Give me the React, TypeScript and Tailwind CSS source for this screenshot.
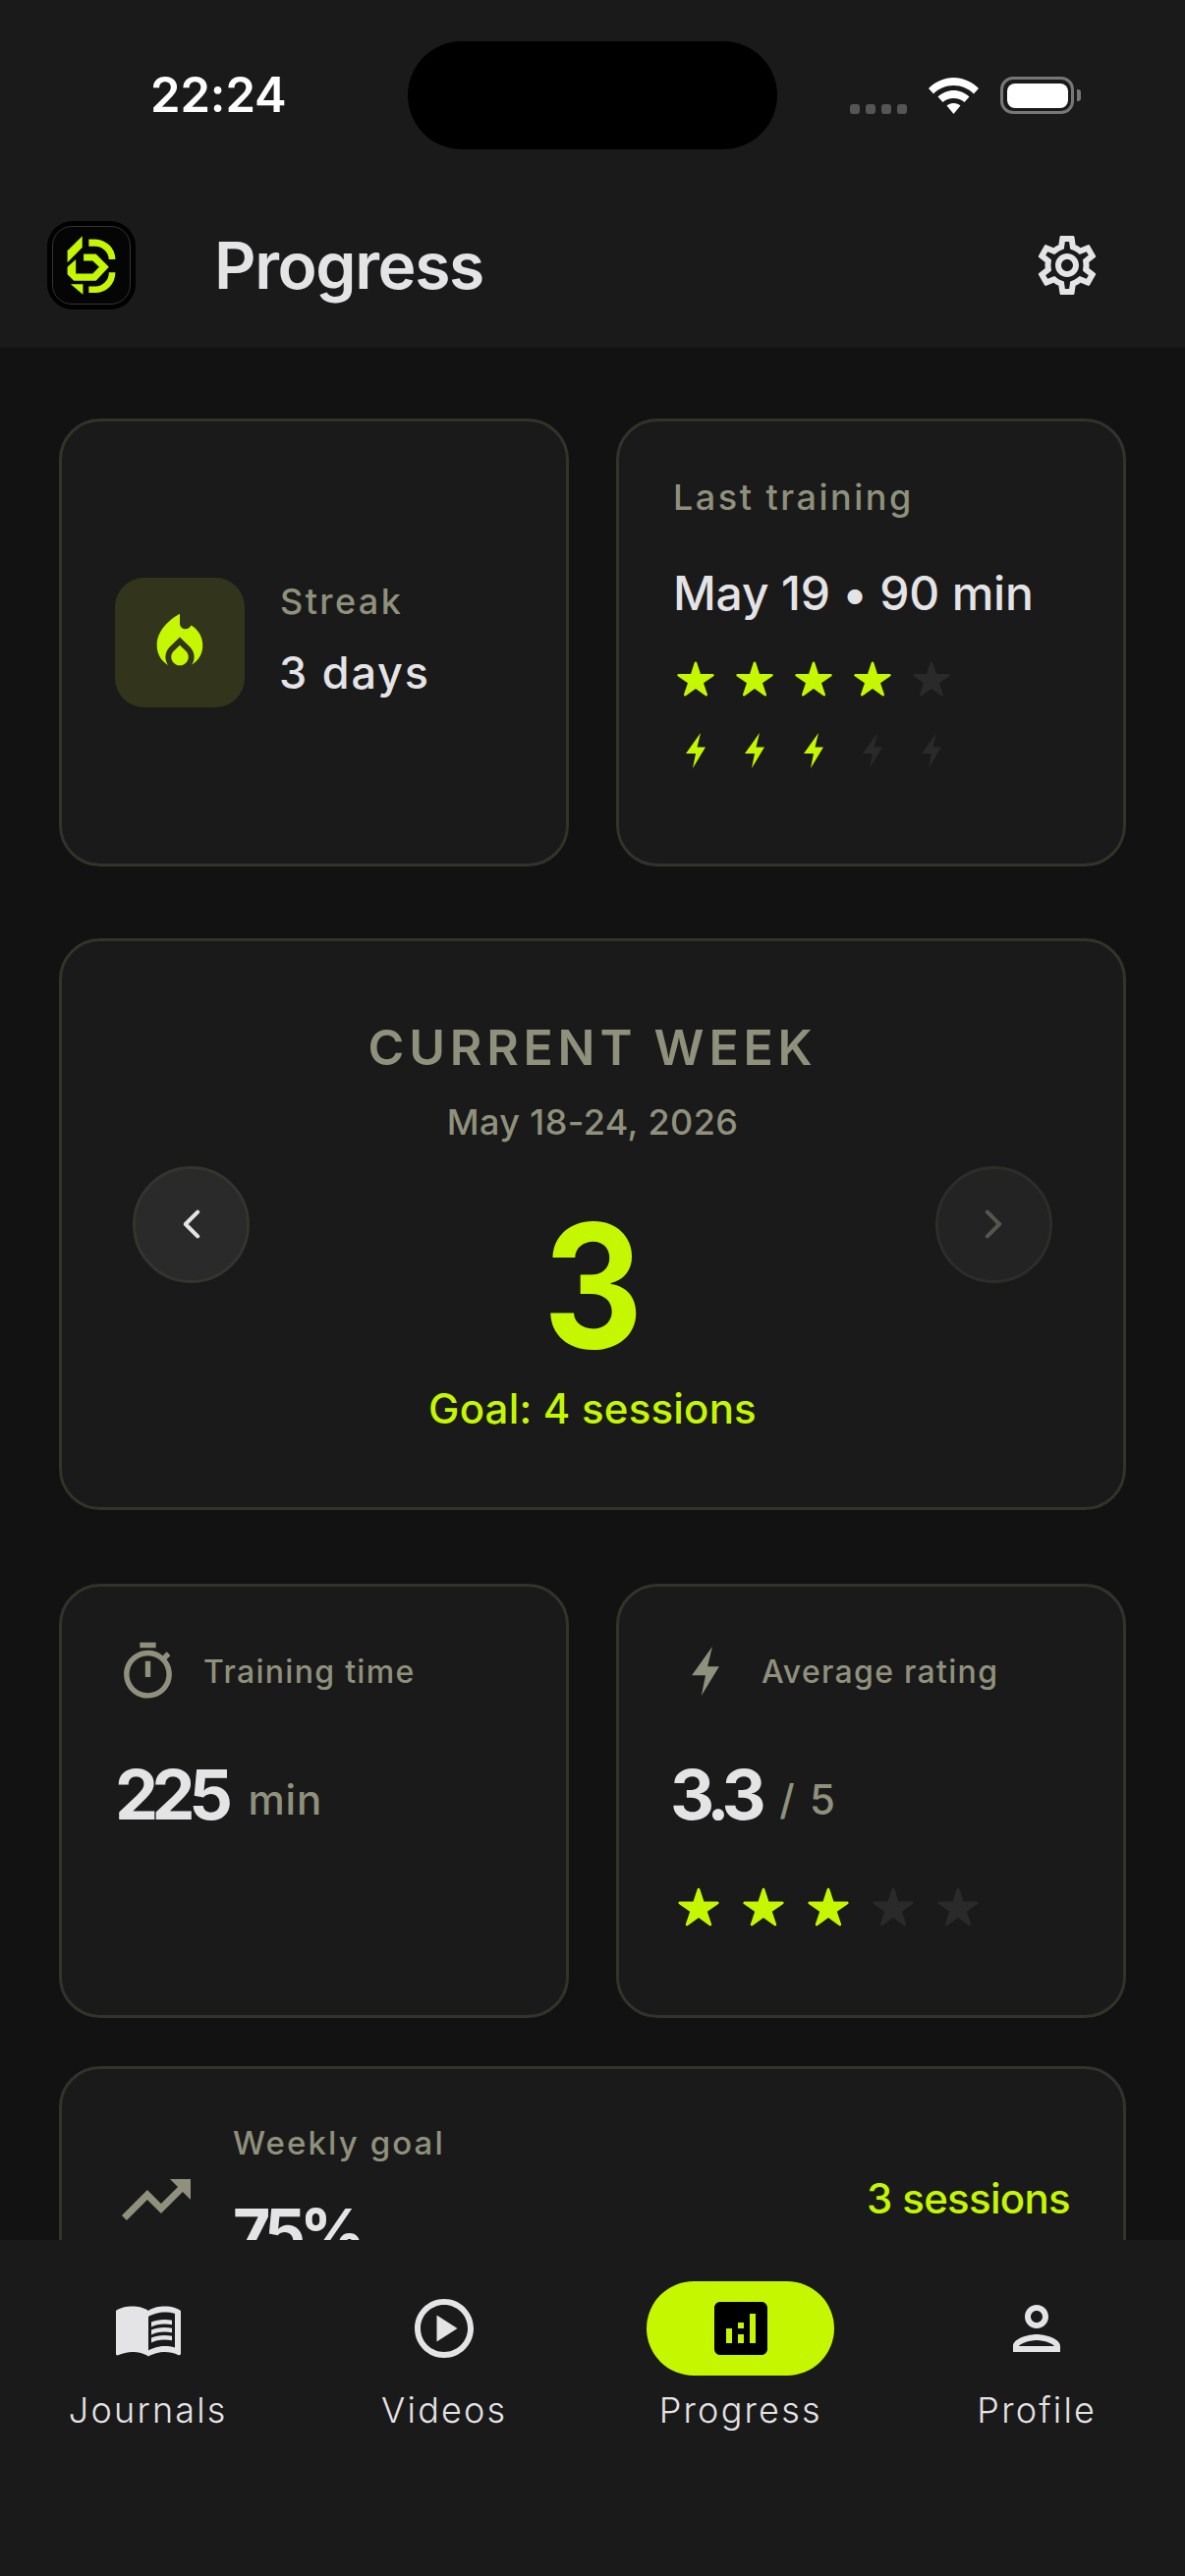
import React from "react";
import { IoStar, IoChevronBack, IoChevronForward } from "react-icons/io5";
import {
  MdLocalFireDepartment,
  MdOutlineTimer,
  MdTrendingUp,
  MdOutlineSettings,
  MdMenuBook,
  MdOutlinePlayCircle,
  MdAnalytics,
  MdOutlinePerson,
} from "react-icons/md";

function Bolt({ className }: { className: string }) {
  return (
    <svg viewBox="0 0 20 36" className={className} fill="currentColor">
      <path d="M15 0 L0 21 H10 L7 36 L20 14.5 H11.5 Z" />
    </svg>
  );
}

function Logo() {
  return (
    <div className="flex h-[90px] w-[90px] items-center justify-center rounded-[26px] bg-black">
      <div className="flex h-[80px] w-[80px] items-center justify-center rounded-[20px] border border-[#34352c] bg-[#050505]">
        <svg viewBox="88 106 156 188" className="h-[62px] w-[52px]" fill="#c4f700">
          <path d="M138 110 V145 L92 192 V155 Z" />
          <path d="M158 120 H178 A62 62 0 0 1 240 182 H220 A42 42 0 0 0 178 142 H158 Z" />
          <path d="M142 165 H180 L220 205 L180 248 H112 L92 228 V205 L118 182 V226 H170 L190 205 L170 186 H142 Z" />
          <path d="M158 285 V265 H178 A42 42 0 0 0 220 222 H240 A62 62 0 0 1 178 285 Z" />
          <path d="M102 258 H140 V290 Z" />
        </svg>
      </div>
    </div>
  );
}

function StatusBar() {
  return (
    <div className="flex pt-[42px]">
      <div className="flex h-[110px] w-[415px] items-center pl-[153px] text-[49px] leading-[60px] font-semibold tracking-[-0.1px] text-white">
        22:24
      </div>
      <div className="h-[110px] w-[376px] rounded-full bg-black" />
      <div className="flex h-[74px] items-end pl-[74px]">
        <div className="flex gap-[6px]">
          <div className="h-[10px] w-[10px] rounded-[3px] bg-[#555555]" />
          <div className="h-[10px] w-[10px] rounded-[3px] bg-[#555555]" />
          <div className="h-[10px] w-[10px] rounded-[3px] bg-[#555555]" />
          <div className="h-[10px] w-[10px] rounded-[3px] bg-[#555555]" />
        </div>
        <svg viewBox="0 0 51 37" className="ml-[22px] h-[37px] w-[51px]" fill="white">
          <path d="M25.5 0 C35 0 44 4 51 11 L46 16.5 C40.500 11 33.500 8 25.500 8 C17.500 8 10.500 11 5 16.500 L0 11 C7 4 16 0 25.500 0 Z" />
          <path d="M25.500 13 C31.500 13 37 15.500 41.500 19.500 L36.500 25 C33.500 22.500 29.500 21 25.500 21 C21.500 21 17.500 22.500 14.500 25 L9.500 19.500 C14 15.500 19.500 13 25.500 13 Z" />
          <path d="M25.500 26 C28.500 26 30.500 27 32.500 28.500 L25.500 37 L18.500 28.500 C20.500 27 22.500 26 25.500 26 Z" />
        </svg>
        <div className="ml-[22px] flex h-[38px] w-[75px] items-center justify-center rounded-[13px] border-[3.5px] border-[#777777]">
          <div className="h-[25px] w-[62px] rounded-[8px] bg-white" />
        </div>
        <div className="mb-[13px] ml-[3px] h-[12px] w-[4px] rounded-r-[3px] bg-[#777777]" />
      </div>
    </div>
  );
}

function Stars({ n, size, gap }: { n: number; size: string; gap: string }) {
  return (
    <div className={gap}>
      {[0, 1, 2, 3, 4].map((i) => (
        <IoStar key={i} className={`${size} ${i < n ? "text-[#c4f700]" : "text-[#2a2a2a]"}`} />
      ))}
    </div>
  );
}

function NavItem({ label, children }: { label: string; children: React.ReactNode }) {
  return (
    <div className="flex flex-col items-center">
      <div className="flex h-[96px] items-center justify-center">{children}</div>
      <div className="mt-[13px] text-[36px] leading-[44px] font-light tracking-[2.2px] text-[#e4e3e5]">{label}</div>
    </div>
  );
}

export default function App() {
  const card = "rounded-[42px] border-[3px] border-[#32342a] bg-[#1a1a1a]";
  return (
    <div className="flex h-[2622px] w-[1206px] flex-col overflow-hidden bg-[#121212] font-['Inter',sans-serif]">
      <header className="h-[354px] shrink-0 bg-[#1a1a1a]">
        <StatusBar />
        <div className="mt-[73px] flex h-[90px] items-center pr-[84px] pl-[48px]">
          <Logo />
          <h1 className="ml-[80px] text-[66px] leading-[80px] font-semibold tracking-[-1.4px] text-[#e4e3e5]">Progress</h1>
          <MdOutlineSettings className="ml-auto h-[72px] w-[72px] text-[#e4e3e5]" />
        </div>
      </header>

      <main className="min-h-0 flex-1 overflow-hidden px-[60px] pt-[72px]">
        <div className="grid grid-cols-2 gap-x-[48px]">
          <div className={`${card} flex h-[456px] items-center pl-[54px]`}>
            <div className="flex h-[132px] w-[132px] items-center justify-center rounded-[30px] bg-[#32351b]">
              <MdLocalFireDepartment className="h-[70px] w-[70px] text-[#c4f700]" />
            </div>
            <div className="ml-[36px]">
              <div className="-mt-[5px] text-[36px] leading-[44px] font-medium tracking-[2.4px] text-[#8f917c]">Streak</div>
              <div className="mt-[23px] -ml-[1px] text-[45px] leading-[56px] font-medium tracking-[1.8px] text-[#e4e3e5]">3 days</div>
            </div>
          </div>
          <div className={`${card} h-[456px] pt-[55px] pl-[55px]`}>
            <div className="text-[36px] leading-[44px] font-medium tracking-[2.5px] text-[#8f917c]">Last training</div>
            <div className="mt-[46px] text-[48px] leading-[60px] font-medium tracking-[-0.2px] text-[#e4e3e5]">May 19 • 90 min</div>
            <Stars n={4} size="h-[40px] w-[40px]" gap="mt-[37px] flex gap-[20px] pl-[3px]" />
            <div className="mt-[35px] flex gap-[40px] pl-[13px]">
              {[0, 1, 2, 3, 4].map((i) => (
                <Bolt key={i} className={`h-[36px] w-[20px] ${i < 3 ? "text-[#c4f700]" : "text-[#2a2a2a]"}`} />
              ))}
            </div>
          </div>
        </div>

        <div className={`${card} mt-[73px] flex h-[582px] items-center justify-between px-[72px]`}>
          <button className="flex h-[119px] w-[119px] items-center justify-center rounded-full border-[3px] border-[#34352c] bg-[#2a2a2a]">
            <IoChevronBack className="h-[44px] w-[44px] text-[#e4e3e5]" />
          </button>
          <div className="flex flex-col items-center">
            <div className="text-[50px] leading-[66px] font-semibold tracking-[4.8px] text-[#8f917c]">CURRENT WEEK</div>
            <div className="mt-[21px] text-[36px] leading-[44px] font-medium tracking-[0.4px] text-[#8f917c]">May 18-24, 2026</div>
            <div className="mt-[54px] scale-x-90 text-[175px] leading-[180px] font-bold text-[#c4f700]">3</div>
            <div className="mt-[10px] text-[42px] leading-[52px] font-medium tracking-[0.2px] text-[#c4f700]">Goal: 4 sessions</div>
          </div>
          <button className="flex h-[119px] w-[119px] items-center justify-center rounded-full border-[3px] border-[#2d2e28] bg-[#232323]">
            <IoChevronForward className="h-[44px] w-[44px] text-[#55574c]" />
          </button>
        </div>

        <div className="mt-[75px] grid grid-cols-2 gap-x-[48px]">
          <div className={`${card} h-[442px] pt-[56px] pl-[55px]`}>
            <div className="flex h-[60px] items-center">
              <MdOutlineTimer className="h-[65px] w-[65px] text-[#8f917c]" />
              <div className="mt-[2px] ml-[24px] text-[32px] leading-[40px] font-medium tracking-[1.3px] text-[#8f917c]">Training time</div>
            </div>
            <div className="mt-[52px] -ml-[1px] flex items-center gap-[22px]">
              <div className="text-[70px] leading-[88px] font-bold tracking-[-6.500px] text-[#e4e3e5]">225</div>
              <div className="pt-[10px] text-[42px] leading-[52px] font-medium tracking-[0.8px] text-[#8f917c]">min</div>
            </div>
          </div>
          <div className={`${card} h-[442px] pt-[56px] pl-[55px]`}>
            <div className="flex h-[60px] items-center">
              <div className="flex w-[65px] justify-center">
                <Bolt className="h-[50px] w-[28px] text-[#8f917c]" />
              </div>
              <div className="mt-[2px] ml-[25px] text-[32px] leading-[40px] font-medium tracking-[1.3px] text-[#8f917c]">Average rating</div>
            </div>
            <div className="mt-[52px] -ml-[3px] flex items-center gap-[20px]">
              <div className="text-[70px] leading-[88px] font-bold tracking-[-6.500px] text-[#e4e3e5]">3.3</div>
              <div className="pt-[10px] text-[42px] leading-[52px] font-medium tracking-[2px] text-[#8f917c]">/ 5</div>
            </div>
            <Stars n={3} size="h-[44px] w-[44px]" gap="mt-[48px] flex gap-[22px] pl-[4px]" />
          </div>
        </div>

        <div className={`${card} mt-[49px] flex items-center pt-[55px] pr-[54px] pb-[40px] pl-[54px]`}>
          <MdTrendingUp className="h-[84px] w-[84px] text-[#8f917c]" />
          <div className="ml-[36px]">
            <div className="text-[33px] leading-[40px] font-medium tracking-[2.1px] text-[#8f917c]">Weekly goal</div>
            <div className="mt-[27px] text-[66px] leading-[88px] font-bold tracking-[-6px] text-[#e4e3e5]">75%</div>
          </div>
          <div className="-mt-[1px] ml-auto text-[42px] leading-[52px] font-medium tracking-[-0.7px] text-[#c4f700]">3 sessions</div>
        </div>
      </main>

      <nav className="grid h-[342px] shrink-0 grid-cols-4 bg-[#1a1a1a] pt-[42px]">
        <NavItem label="Journals">
          <MdMenuBook className="h-[72px] w-[72px] text-[#e4e3e5]" />
        </NavItem>
        <NavItem label="Videos">
          <MdOutlinePlayCircle className="h-[72px] w-[72px] text-[#e4e3e5]" />
        </NavItem>
        <NavItem label="Progress">
          <div className="flex h-[96px] w-[191px] items-center justify-center rounded-full bg-[#c4f700]">
            <MdAnalytics className="h-[72px] w-[72px] text-black" />
          </div>
        </NavItem>
        <NavItem label="Profile">
          <MdOutlinePerson className="h-[72px] w-[72px] text-[#e4e3e5]" />
        </NavItem>
      </nav>
    </div>
  );
}
